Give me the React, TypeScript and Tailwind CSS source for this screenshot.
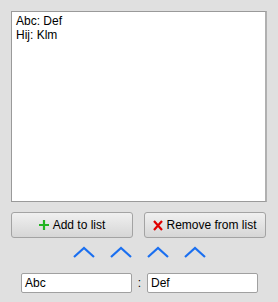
import React from 'react';

const items = ['Abc: Def', 'Hij: Klm'];

function Chevron() {
  return (
    <svg width="22" height="14" viewBox="0 0 22 14" className="block">
      <polyline points="1,12 11,3 21,12" fill="none" stroke="#1a6ff0" strokeWidth="2.2" />
    </svg>
  );
}

export default function App() {
  return (
    <div
      className="w-[278px] h-[302px] bg-[#e0e0e0] text-[12px] text-black flex flex-col px-[11px] pt-[11px]"
      style={{ fontFamily: '"Liberation Sans", Arial, sans-serif' }}
    >
      {/* List */}
      <div className="h-[191px] bg-white border border-[#9a9a9a] border-r-2 border-r-[#b0b0b0] px-[4px] pt-[2px] leading-[14px]">
        {items.map((item) => (
          <div key={item}>{item}</div>
        ))}
      </div>

      {/* Buttons */}
      <div className="flex gap-[11px] mt-[10px]">
        <button className="w-[122px] h-[26px] rounded-[3px] border border-[#a3a3a3] bg-gradient-to-b from-[#f0f0f0] to-[#d6d6d6] flex items-center justify-center gap-[4px] text-[12px]">
          <svg width="10" height="10" viewBox="0 0 10 10" className="block">
            <path d="M5 0v10M0 5h10" stroke="#22b422" strokeWidth="2.2" />
          </svg>
          <span>Add to list</span>
        </button>
        <button className="w-[122px] h-[26px] rounded-[3px] border border-[#a3a3a3] bg-gradient-to-b from-[#f0f0f0] to-[#d6d6d6] flex items-center justify-center gap-[3px] text-[12px]">
          <svg width="10" height="11" viewBox="0 0 10 11" className="block">
            <path d="M1 1l8 9M9 1l-8 9" stroke="#e00000" strokeWidth="2.2" />
          </svg>
          <span>Remove from list</span>
        </button>
      </div>

      {/* Chevrons */}
      <div className="flex justify-center gap-[15px] mt-[7px]">
        <Chevron />
        <Chevron />
        <Chevron />
        <Chevron />
      </div>

      {/* Inputs */}
      <div className="flex items-center mt-[14px] pl-[10px]">
        <div className="w-[111px] h-[20px] bg-white border border-[#a0a0a0] rounded-[2px] px-[3px] flex items-center">Abc</div>
        <span className="w-[15px] text-center">:</span>
        <div className="w-[111px] h-[20px] bg-white border border-[#a0a0a0] rounded-[2px] px-[3px] flex items-center">Def</div>
      </div>
    </div>
  );
}
